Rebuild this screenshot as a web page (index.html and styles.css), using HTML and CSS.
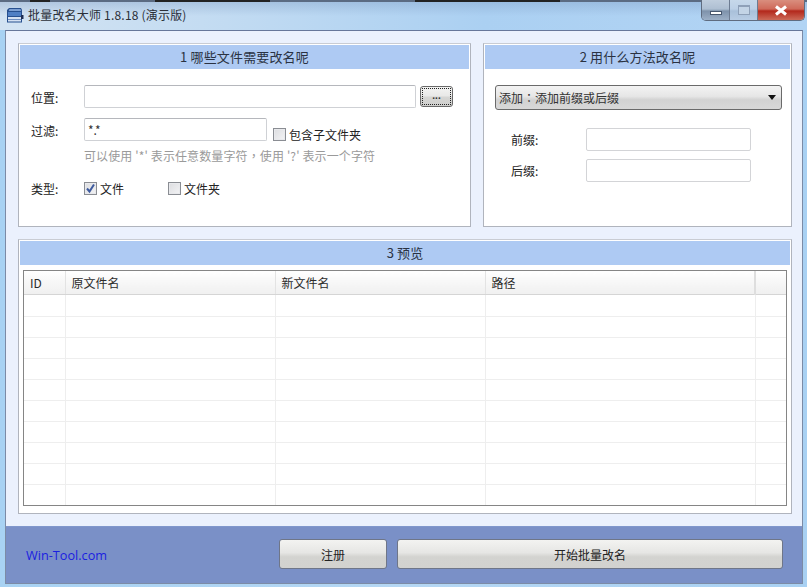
FILE: index.html
```html
<!DOCTYPE html>
<html lang="zh">
<head>
<meta charset="utf-8">
<title>批量改名大师</title>
<link rel="stylesheet" href="styles.css">
</head>
<body>
<div class="window">
  <header class="titlebar">
    <svg class="app-icon" width="18" height="17" viewBox="0 0 18 17">
      <path d="M3 1h12l1 2v12.500H1V3z" fill="#27508f"/>
      <path d="M3.500 2h11l.8 2H2.700z" fill="#7c9fd2"/>
      <rect x="2" y="5" width="13" height="4" fill="#4f7fc4"/>
      <rect x="2" y="10" width="13" height="4.500" fill="#d5e1f2"/>
      <path d="M2 12.500h13" stroke="#6f8fc0"/>
      <rect x="15" y="8" width="2.500" height="4" fill="#1d2f55"/>
    </svg>
    <span class="title-text">批量改名大师 1.8.18 (演示版)</span>
    <div class="controls">
      <span class="ctl ctl-min"><i></i></span>
      <span class="ctl ctl-max"><i></i></span>
      <span class="ctl ctl-close">
        <svg width="16" height="11" viewBox="0 0 16 11"><path d="M3 1.500l10 8M13 1.500l-10 8" stroke="#fff" stroke-width="3"/></svg>
      </span>
    </div>
  </header>
  <div class="client">
    <main class="content">
      <div class="top-row">
        <section class="panel panel-source">
          <h2 class="panel-head">1 哪些文件需要改名呢</h2>
          <div class="source-body">
            <div class="row row-location">
              <label class="field-label">位置:</label>
              <input class="input input-path" type="text">
              <button class="browse" type="button"><span>...</span></button>
            </div>
            <div class="row row-filter">
              <label class="field-label">过滤:</label>
              <input class="input input-filter" type="text" value="*.*">
              <span class="check check-sub"><span class="box"></span>包含子文件夹</span>
            </div>
            <p class="hint">可以使用 '*' 表示任意数量字符<span class="punct" lang="zh-Hant">，</span>使用 '?' 表示一个字符</p>
            <div class="row row-type">
              <label class="field-label">类型:</label>
              <span class="check check-file">
                <span class="box"><svg width="11" height="11" viewBox="0 0 11 11"><path d="M2 5.500l2.500 3L9 1.500" fill="none" stroke="#3d5a9e" stroke-width="2"/></svg></span>文件
              </span>
              <span class="check"><span class="box"></span>文件夹</span>
            </div>
          </div>
        </section>
        <section class="panel panel-method">
          <h2 class="panel-head">2 用什么方法改名呢</h2>
          <div class="method-body">
            <div class="select"><span>添加<span class="punct" lang="zh-Hant">：</span>添加前缀或后缀</span><i class="arrow"></i></div>
            <div class="row row-affix">
              <label class="affix-label">前缀:</label>
              <input class="input input-affix" type="text">
            </div>
            <div class="row row-affix">
              <label class="affix-label">后缀:</label>
              <input class="input input-affix" type="text">
            </div>
          </div>
        </section>
      </div>
      <section class="panel panel-preview">
        <h2 class="panel-head">3 预览</h2>
        <div class="table-wrap">
          <table class="grid">
            <colgroup><col class="c-id"><col class="c-name"><col class="c-name"><col class="c-path"><col></colgroup>
            <thead><tr><th>ID</th><th>原文件名</th><th>新文件名</th><th>路径</th><th></th></tr></thead>
            <tbody>
              <tr class="first"><td></td><td></td><td></td><td></td><td></td></tr>
              <tr><td></td><td></td><td></td><td></td><td></td></tr>
              <tr><td></td><td></td><td></td><td></td><td></td></tr>
              <tr><td></td><td></td><td></td><td></td><td></td></tr>
              <tr><td></td><td></td><td></td><td></td><td></td></tr>
              <tr><td></td><td></td><td></td><td></td><td></td></tr>
              <tr><td></td><td></td><td></td><td></td><td></td></tr>
              <tr><td></td><td></td><td></td><td></td><td></td></tr>
              <tr><td></td><td></td><td></td><td></td><td></td></tr>
              <tr class="last"><td></td><td></td><td></td><td></td><td></td></tr>
            </tbody>
          </table>
        </div>
      </section>
    </main>
    <footer class="footer">
      <a class="site" href="#">Win-Tool.com</a>
      <button class="action action-reg" type="button">注册</button>
      <button class="action action-start" type="button">开始批量改名</button>
    </footer>
  </div>
</div>
</body>
</html>
```
FILE: styles.css
```css
* { box-sizing: border-box; }
html, body { margin: 0; padding: 0; }
body {
  width: 807px;
  height: 587px;
  overflow: hidden;
  font-family: "Noto Sans CJK SC", "Noto Sans", sans-serif;
  font-size: 12px;
  color: #222;
}
.window {
  width: 807px;
  height: 587px;
  display: flex;
  flex-direction: column;
  padding: 0 4px 3px 5px;
  background: linear-gradient(90deg, #a8d2f3 0, #b5d7f4 50%, #a9d1f3 100%);
}
.titlebar {
  height: 30px;
  margin: 0 -4px 0 -5px;
  padding: 0 3px 0 6px;
  flex: none;
  display: flex;
  align-items: center;
  border-top: 2px solid #5b6b82;
  background:
    linear-gradient(180deg, rgba(120,150,190,.35) 0, rgba(120,150,190,0) 14px),
    linear-gradient(90deg, #d3e3f2 0, #c4dcf2 25%, #abd0f2 60%, #b2d4f4 100%);
  position: relative;
}
.titlebar::before {
  content: "";
  position: absolute;
  top: -2px;
  left: 0;
  right: 0;
  height: 2px;
  background: linear-gradient(90deg,
    transparent 30px, #222 30px, #222 50px, transparent 50px,
    transparent 155px, #222 155px, #222 270px, transparent 270px,
    transparent 415px, #222 415px, #222 560px, transparent 560px);
}
.app-icon { flex: none; margin-top: -1px; }
.title-text {
  margin-left: 4px;
  margin-top: -4px;
  font-size: 12px;
  letter-spacing: .2px;
  color: #2b2f38;
}
.controls {
  position: absolute;
  top: -2px;
  right: 2px;
  display: flex;
  height: 21px;
  border: 1px solid #5f6c80;
  border-top: 0;
  border-radius: 0 0 5px 5px;
  overflow: hidden;
}
.ctl {
  display: flex;
  align-items: center;
  justify-content: center;
  height: 100%;
  border-right: 1px solid #6d7c92;
}
.ctl-min {
  width: 28px;
  background: linear-gradient(180deg, #bfcddd 0, #aebfd2 45%, #7e92ab 55%, #9cafc6 100%);
}
.ctl-min i {
  display: block;
  width: 12px;
  height: 4px;
  margin-top: 5px;
  background: #fff;
  border: 1px solid #46566d;
}
.ctl-max {
  width: 28px;
  background: linear-gradient(180deg, #c6d8ea 0, #bcd0e6 45%, #a9c0da 55%, #b8cde4 100%);
}
.ctl-max i {
  display: block;
  width: 12px;
  height: 10px;
  border: 1px solid #8ea0b8;
  border-top-width: 2px;
  background: #c3d4e6;
}
.ctl-close {
  width: 46px;
  border-right: 0;
  background: linear-gradient(180deg, #d98e7e 0, #cf6a5a 45%, #b3281c 55%, #cc6a58 100%);
}
.client {
  flex: 1;
  min-height: 0;
  display: flex;
  flex-direction: column;
  border: 1px solid #7c8ba6;
  border-top-color: #67779a;
  background: #ebf1fd;
}
.content {
  flex: 1;
  min-height: 0;
  padding: 12px 10px 0 12px;
  display: flex;
  flex-direction: column;
  gap: 12px;
}
.top-row {
  display: flex;
  gap: 12px;
  height: 184px;
  flex: none;
}
.panel {
  background: #fff;
  border: 1px solid #b0b4bd;
  border-top-color: #c9ccd3;
  padding: 1px;
  display: flex;
  flex-direction: column;
}
.panel-source { width: 453px; }
.panel-method { width: 309px; }
.panel-preview { height: 275px; flex: none; padding-bottom: 7px; }
.panel-head {
  margin: 0;
  height: 24px;
  flex: none;
  background: #aecaf3;
  font-size: 13px;
  font-weight: 400;
  letter-spacing: .15px;
  line-height: 24px;
  text-align: center;
  color: #2a3242;
}
.punct { font-family: "Noto Sans CJK TC", sans-serif; }
.source-body {
  padding: 16px 0 0 11px;
}
.row { display: flex; align-items: center; }
.field-label { width: 53px; flex: none; padding-top: 2px; color: #222; }
.input {
  border: 1px solid #cfd1d5;
  border-top-color: #b5b7bc;
  border-radius: 2px;
  background: #fff;
  padding: 0 0 0 3px;
  font: inherit;
  color: #333;
  outline: 0;
}
.input-path { width: 332px; height: 23px; }
.browse {
  margin-left: 4px;
  width: 33px;
  height: 21px;
  padding: 1px;
  border: 1px solid #6a6a6a;
  border-radius: 3px;
  background: linear-gradient(180deg, #f4f4f3 0, #e8e8e7 48%, #d6d6d4 52%, #cfcfcd 100%);
  font: 700 10px "Liberation Sans", sans-serif;
  color: #333;
}
.browse span {
  display: block;
  height: 100%;
  line-height: 14px;
  border: 1px dotted #222;
}
.row-location { height: 23px; }
.row-filter { margin-top: 10px; height: 23px; }
.input-filter { width: 183px; height: 23px; }
.check { display: inline-flex; align-items: center; color: #222; }
.check-sub { margin-left: 6px; margin-top: 9px; }
.box {
  width: 13px;
  height: 13px;
  margin-right: 3px;
  flex: none;
  display: flex;
  align-items: center;
  justify-content: center;
  border: 1px solid #8a8d93;
  background: linear-gradient(135deg, #dcdde0 0, #f3f3f5 100%);
  box-shadow: inset 0 0 0 1px #e8e9ec;
}
.hint {
  margin: 6px 0 0 53px;
  height: 17px;
  line-height: 17px;
  color: #9a9a9a;
  white-space: nowrap;
  font-size: 12px;
  letter-spacing: .12px;
}
.row-type { margin-top: 15px; height: 18px; }
.row-type .field-label { padding-top: 0; }
.check-file { width: 84px; }
.method-body {
  padding: 16px 8px 0 10px;
}
.select {
  width: 287px;
  height: 25px;
  display: flex;
  align-items: center;
  justify-content: space-between;
  padding: 0 5px 0 3px;
  border: 1px solid #6a6a6a;
  border-radius: 3px;
  background: linear-gradient(180deg, #f3f3f3 0, #e6e6e6 45%, #d2d2d2 60%, #d8d8d8 100%);
  color: #333;
}
.arrow {
  width: 0;
  height: 0;
  border-left: 4px solid transparent;
  border-right: 4px solid transparent;
  border-top: 5px solid #111;
}
.row-affix { margin-left: 16px; }
.method-body .select + .row-affix { margin-top: 18px; }
.row-affix + .row-affix { margin-top: 8px; }
.affix-label { width: 75px; flex: none; color: #222; }
.input-affix { width: 165px; height: 23px; border-color: #d3d4d7; }
.table-wrap {
  margin: 5px 3px 0;
  flex: 1;
  min-height: 0;
  border: 1px solid #858585;
  overflow: hidden;
  background: #fff;
}
.grid {
  width: 762px;
  border-collapse: collapse;
  table-layout: fixed;
}
.c-id { width: 41px; }
.c-name { width: 210px; }
.c-path { width: 270px; }
.grid th {
  height: 23px;
  padding: 0 0 0 6px;
  font-weight: 400;
  font-size: 12px;
  text-align: left;
  color: #2b2b2b;
  background: linear-gradient(180deg, #fff 0, #f8f8f8 40%, #f0f0f0 100%);
  border-right: 1px solid #e3e3e3;
  border-bottom: 1px solid #d5d5d5;
}
.grid th:last-child { border-right: 0; }
.grid th:nth-child(4) { border-right: 2px solid #dedede; }
.grid td {
  height: 21px;
  padding: 0;
  border-right: 1px solid #eeeeee;
  border-bottom: 1px solid #eeeeee;
}
.grid .first td { height: 22px; }
.grid td:last-child { border-right: 0; }
.grid .last td { border-bottom: 0; }
.footer {
  height: 57px;
  flex: none;
  display: flex;
  align-items: center;
  padding: 0 18px 2px 20px;
  background: #7a90c7;
  border-top: 1px solid #8097cc;
}
.site {
  width: 253px;
  flex: none;
  margin-top: 1px;
  font-family: "Open Sans", "Noto Sans", sans-serif;
  font-size: 12.700px;
  color: #1a20e0;
  text-decoration: none;
}
.action {
  height: 30px;
  border: 1px solid #6f7688;
  border-radius: 3px;
  background: linear-gradient(180deg, #f3f3f1 0, #e6e6e4 45%, #d3d3d0 60%, #d2d2cf 100%);
  font: inherit;
  color: #222;
  padding: 0;
}
.action-reg { width: 108px; }
.action-start { width: 386px; margin-left: 10px; }
```
